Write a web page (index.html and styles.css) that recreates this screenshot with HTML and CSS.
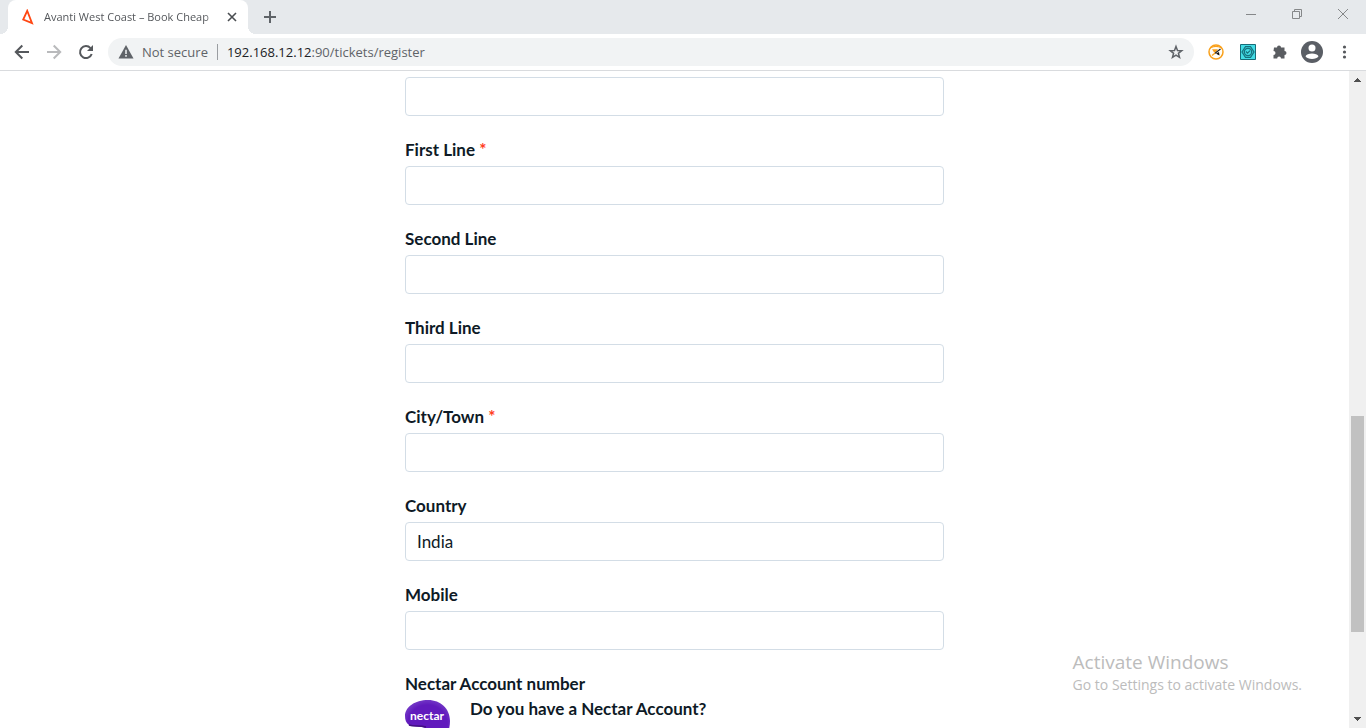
FILE: index.html
```html
<!DOCTYPE html>
<html lang="en">
<head>
<meta charset="utf-8">
<meta name="viewport" content="width=device-width, initial-scale=1">
<title>Avanti West Coast – Book Cheap</title>
<link rel="stylesheet" href="styles.css">
</head>
<body>
<div class="browser">
  <header class="tabstrip">
    <div class="tab">
      <svg class="tab-logo" width="12" height="16" viewBox="0 0 12 16"><path d="M5.2 1.8 1.2 10.6 10 14.2Z" fill="none" stroke="#ff4713" stroke-width="1.8" stroke-linejoin="miter"/></svg>
      <span class="tab-title">Avanti West Coast – Book Cheap</span>
      <button class="plain tab-close" aria-label="Close tab"><svg width="10" height="10" viewBox="0 0 10 10"><path d="M1 1 9 9M9 1 1 9" stroke="#4a4d51" stroke-width="1.6"/></svg></button>
    </div>
    <button class="plain new-tab" aria-label="New tab"><svg width="12" height="12" viewBox="0 0 12 12"><path d="M6 0V12M0 6H12" stroke="#5f6368" stroke-width="2"/></svg></button>
    <div class="window-controls">
      <button class="plain" aria-label="Minimise"><svg width="10" height="10" viewBox="0 0 10 10"><path d="M0 5.500H10" stroke="#858789"/></svg></button>
      <button class="plain" aria-label="Restore"><svg width="10" height="10" viewBox="0 0 10 10"><path d="M.5 2.500H7.500V9.500H.5ZM2.500 2.500V.5H9.500V7.500H7.500" fill="none" stroke="#858789"/></svg></button>
      <button class="plain" aria-label="Close"><svg width="10" height="10" viewBox="0 0 10 10"><path d="M0 0 10 10M10 0 0 10" stroke="#858789"/></svg></button>
    </div>
  </header>
  <nav class="toolbar" aria-label="Browser toolbar">
    <div class="nav-buttons">
      <button class="plain" aria-label="Back"><svg width="16" height="16" viewBox="0 0 16 16"><path d="M15 8H2M8.300 1.500 1.800 8 8.300 14.500" fill="none" stroke="#55585c" stroke-width="2"/></svg></button>
      <button class="plain" aria-label="Forward"><svg width="16" height="16" viewBox="0 0 16 16"><path d="M1 8H14M7.700 1.500 14.200 8 7.700 14.500" fill="none" stroke="#b9babc" stroke-width="2"/></svg></button>
      <button class="plain" aria-label="Reload"><svg width="16" height="16" viewBox="0 0 16 16"><path d="M13.700 10A6 6 0 1 1 12.500 4.100" fill="none" stroke="#55585c" stroke-width="2"/><path d="M15 1V7H9Z" fill="#55585c"/></svg></button>
    </div>
    <div class="address-bar">
      <svg width="16" height="14" viewBox="0 0 16 14"><path d="M8 0 15.500 13.500H.5Z" fill="#5f6368"/><path d="M8 4.800V9M8 10V11.800" stroke="#f1f3f4" stroke-width="1.500"/></svg>
      <span class="not-secure">Not secure</span>
      <span class="url"><b>192.168.12.12</b>:90/tickets/register</span>
      <button class="plain star" aria-label="Bookmark this page"><svg width="16" height="16" viewBox="0 0 16 16"><path d="M8 2.500 9.500 6.500 13.700 6.700 10.400 9.300 11.500 13.400 8 11.100 4.500 13.400 5.600 9.300 2.300 6.700 6.500 6.500Z" fill="none" stroke="#5f6368" stroke-width="1.500"/></svg></button>
    </div>
    <div class="extensions">
      <button class="plain" aria-label="Page speed extension"><svg width="16" height="16" viewBox="0 0 16 16"><circle cx="8" cy="8" r="7" fill="#fffdf7" stroke="#f9a01b" stroke-width="1.500"/><path d="M2 4.500C4 .8 12 .8 14 4.500L12.500 4C10 2.800 6 2.800 3.500 4Z" fill="#f9a01b"/><path d="M4 5.200H10L7.500 8.300H6Z" fill="#f9a01b"/><path d="M4 11.500 7.500 8.800" stroke="#f9a01b" stroke-width="1.300"/><path d="M7 9.200 12.500 5" stroke="#222" stroke-width="1.200"/><path d="M8 9.500 11 8 11.500 11.500 9.500 10.500Z" fill="#111"/></svg></button>
      <button class="plain" aria-label="Inspection extension"><svg width="16" height="16" viewBox="0 0 16 16"><path d="M.5.500H15.500V15.500H.5Z" fill="#43dce5" stroke="#176c78"/><path d="M5.500 2.500H10.500L14 8 10.500 13.500H5.500L2 8Z" fill="#38bfc9" stroke="#16727e" stroke-width="1.200"/><circle cx="8" cy="8" r="3.600" fill="#43dce5" stroke="#16727e" stroke-width="1.200"/><path d="M6 7.500 7.500 9.200 10 6.600" fill="none" stroke="#16727e" stroke-width="1.200"/></svg></button>
      <button class="plain" aria-label="Extensions"><svg width="16" height="16" viewBox="0 0 16 16"><path d="M2 3.500H5A2 2 0 1 1 9 3.500H12.500V7A2 2 0 1 1 12.500 11V14.500H9A1.900 1.900 0 0 0 5.200 14.500H1.500V11A2 2 0 0 0 1.500 7Z" fill="#5a5d61"/></svg></button>
      <button class="plain" aria-label="Profile"><svg width="22" height="22" viewBox="0 0 22 22"><circle cx="11" cy="11" r="11" fill="#5a5e65"/><circle cx="11" cy="7" r="3.500" fill="#fff"/><path d="M4.500 15.200C6 11.700 16 11.700 17.500 15.200C15.500 18.800 6.500 18.800 4.500 15.200Z" fill="#fff"/></svg></button>
      <button class="plain" aria-label="Menu"><svg width="16" height="16" viewBox="0 0 16 16"><g fill="#55585c"><circle cx="8.500" cy="3" r="1.600"/><circle cx="8.500" cy="8" r="1.600"/><circle cx="8.500" cy="13" r="1.600"/></g></svg></button>
    </div>
  </nav>
  <div class="viewport">
    <main class="page">
      <form class="form">
        <div class="field"><input class="control" type="text" aria-label="Address"></div>
        <div class="field"><label class="label" for="line1">First Line <span class="required">*</span></label><input class="control" type="text" id="line1" required></div>
        <div class="field"><label class="label" for="line2">Second Line</label><input class="control" type="text" id="line2"></div>
        <div class="field"><label class="label" for="line3">Third Line</label><input class="control" type="text" id="line3"></div>
        <div class="field"><label class="label" for="city">City/Town <span class="required">*</span></label><input class="control" type="text" id="city" required></div>
        <div class="field"><label class="label" for="country">Country</label><input class="control" type="text" id="country" value="India"></div>
        <div class="field"><label class="label" for="mobile">Mobile</label><input class="control" type="tel" id="mobile"></div>
        <section class="nectar">
          <h2 class="label">Nectar Account number</h2>
          <div class="nectar-row">
            <svg class="nectar-logo" width="46" height="46" viewBox="0 0 46 46" role="img" aria-label="nectar"><defs><radialGradient id="plum" cx="50%" cy="55%" r="55%"><stop offset=".8" stop-color="#611abd"/><stop offset="1" stop-color="#7135c5"/></radialGradient></defs><path d="M0 17C0 8 10 1 23 1S45 10 45 22C45 35 38 45 26 45C20 45 18 37 20 29C16 27 8 28 4 26C1 24 0 21 0 17Z" fill="url(#plum)"/><path d="M4 26C9 28 15 26 21 28" fill="none" stroke="#431082" stroke-width="1.500"/><text x="22" y="21" text-anchor="middle" class="nectar-word">nectar</text></svg>
            <p class="question">Do you have a Nectar Account?</p>
          </div>
        </section>
      </form>
    </main>
    <div class="scrollbar" aria-hidden="true">
      <svg width="17" height="17" viewBox="0 0 17 17"><path d="M8 7H9V8H10V9H11V10H12V11H5V10H6V9H7V8H8Z" fill="#505050"/></svg>
      <div class="track"><div class="thumb"></div></div>
      <svg width="17" height="17" viewBox="0 0 17 17"><path d="M5 6H12V7H11V8H10V9H9V10H8V9H7V8H6V7H5Z" fill="#505050"/></svg>
    </div>
  </div>
  <aside class="watermark"><p class="watermark-title">Activate Windows</p><p class="watermark-note">Go to Settings to activate Windows.</p></aside>
</div>
</body>
</html>
```
FILE: styles.css
```css
* { box-sizing: border-box; }
body { margin: 0; font-family: "Open Sans", "Noto Sans", sans-serif; }
p, h2 { margin: 0; }
svg { display: block; flex: none; }

.plain {
  display: flex;
  align-items: center;
  justify-content: center;
  padding: 0;
  border: 0;
  background: none;
}
.browser {
  display: flex;
  flex-direction: column;
  height: 100vh;
  overflow: hidden;
  position: relative;
  background: #fff;
}

/* Tab strip */
.tabstrip {
  display: flex;
  flex: none;
  height: 34px;
  padding-left: 8px;
  background: #e6e9ec;
}
.tab {
  display: flex;
  align-items: center;
  position: relative;
  width: 240px;
  padding: 0 11px 0 14px;
  border-radius: 8px 8px 0 0;
  background: #fff;
}
.tab::before, .tab::after {
  content: "";
  position: absolute;
  bottom: 0;
  width: 8px;
  height: 8px;
}
.tab::before { right: 100%; background: radial-gradient(circle at 0 0, #e6e9ec 8px, #fff 8px); }
.tab::after { left: 100%; background: radial-gradient(circle at 100% 0, #e6e9ec 8px, #fff 8px); }
.tab-title {
  flex: 1;
  margin-left: 10px;
  overflow: hidden;
  white-space: nowrap;
  font-size: 11px;
  line-height: 16px;
  color: #54575b;
  -webkit-mask-image: linear-gradient(to left, transparent, #000 12px);
  mask-image: linear-gradient(to left, transparent, #000 12px);
}
.tab-close { margin-left: 10px; }
.new-tab { width: 28px; margin-left: 8px; }
.window-controls { display: flex; height: 28px; margin-left: auto; }
.window-controls button { width: 46px; }

/* Toolbar */
.toolbar {
  display: flex;
  align-items: center;
  flex: none;
  height: 37px;
  padding: 0 14px;
  border-bottom: 1px solid #d9dbde;
}
.nav-buttons { display: flex; gap: 16px; }
.address-bar {
  display: flex;
  align-items: center;
  flex: 1;
  height: 28px;
  margin: 0 14px;
  padding: 0 10px;
  border-radius: 14px;
  background: #f1f3f4;
  font-size: 13px;
  line-height: 20px;
  white-space: nowrap;
  color: #5f6368;
}
.not-secure { margin-left: 8px; padding-right: 9px; }
.url { padding-left: 10px; position: relative; }
.url::before {
  content: "";
  position: absolute;
  left: 0;
  top: 2px;
  width: 1px;
  height: 16px;
  background: #9a9da1;
}
.url b { font-weight: 400; color: #202124; }
.star { margin-left: auto; }
.extensions { display: flex; align-items: center; gap: 16px; }
.extensions button:nth-child(4) { margin: 0 -3px; }

/* Page */
.viewport { display: flex; flex: 1; min-height: 0; }
.page { flex: 1; min-width: 0; overflow: hidden; padding: 6px 16px 0; }
.form {
  max-width: 539px;
  margin: 0 auto;
  font-family: Lato, sans-serif;
  color: #0e1a26;
}
.field { display: flex; flex-direction: column; margin-bottom: 22px; }
.label {
  padding-bottom: 4px;
  font-size: 17px;
  line-height: 24px;
  font-weight: 700;
}
.required { color: #ff3b20; }
.control {
  width: 100%;
  height: 39px;
  padding: 0 11px;
  border: 1px solid #d3dde6;
  border-radius: 4px;
  background: #fff;
  font: 400 17px/24px Lato, sans-serif;
  color: #0e1a26;
}
.nectar .label { padding-bottom: 3px; }
.nectar-row { display: flex; gap: 19px; }
.nectar-word { font: 700 12px Lato, sans-serif; fill: #fff; }
.question { font-size: 17px; line-height: 20px; font-weight: 700; }

/* Scrollbar */
.scrollbar { display: flex; flex-direction: column; flex: none; width: 17px; background: #f0f0f0; }
.track { display: flex; flex-direction: column; flex: 1; padding: 0 2px; }
.track::before { content: ""; flex: 328; }
.track::after { content: ""; flex: 79; }
.thumb { flex: 216; background: #c1c1c1; }

.watermark {
  position: absolute;
  right: 64px;
  bottom: 32px;
  color: #bcbcbc;
  pointer-events: none;
}
.watermark-title { font-size: 19px; line-height: 24px; }
.watermark-note { font-size: 14px; line-height: 22px; }
```
